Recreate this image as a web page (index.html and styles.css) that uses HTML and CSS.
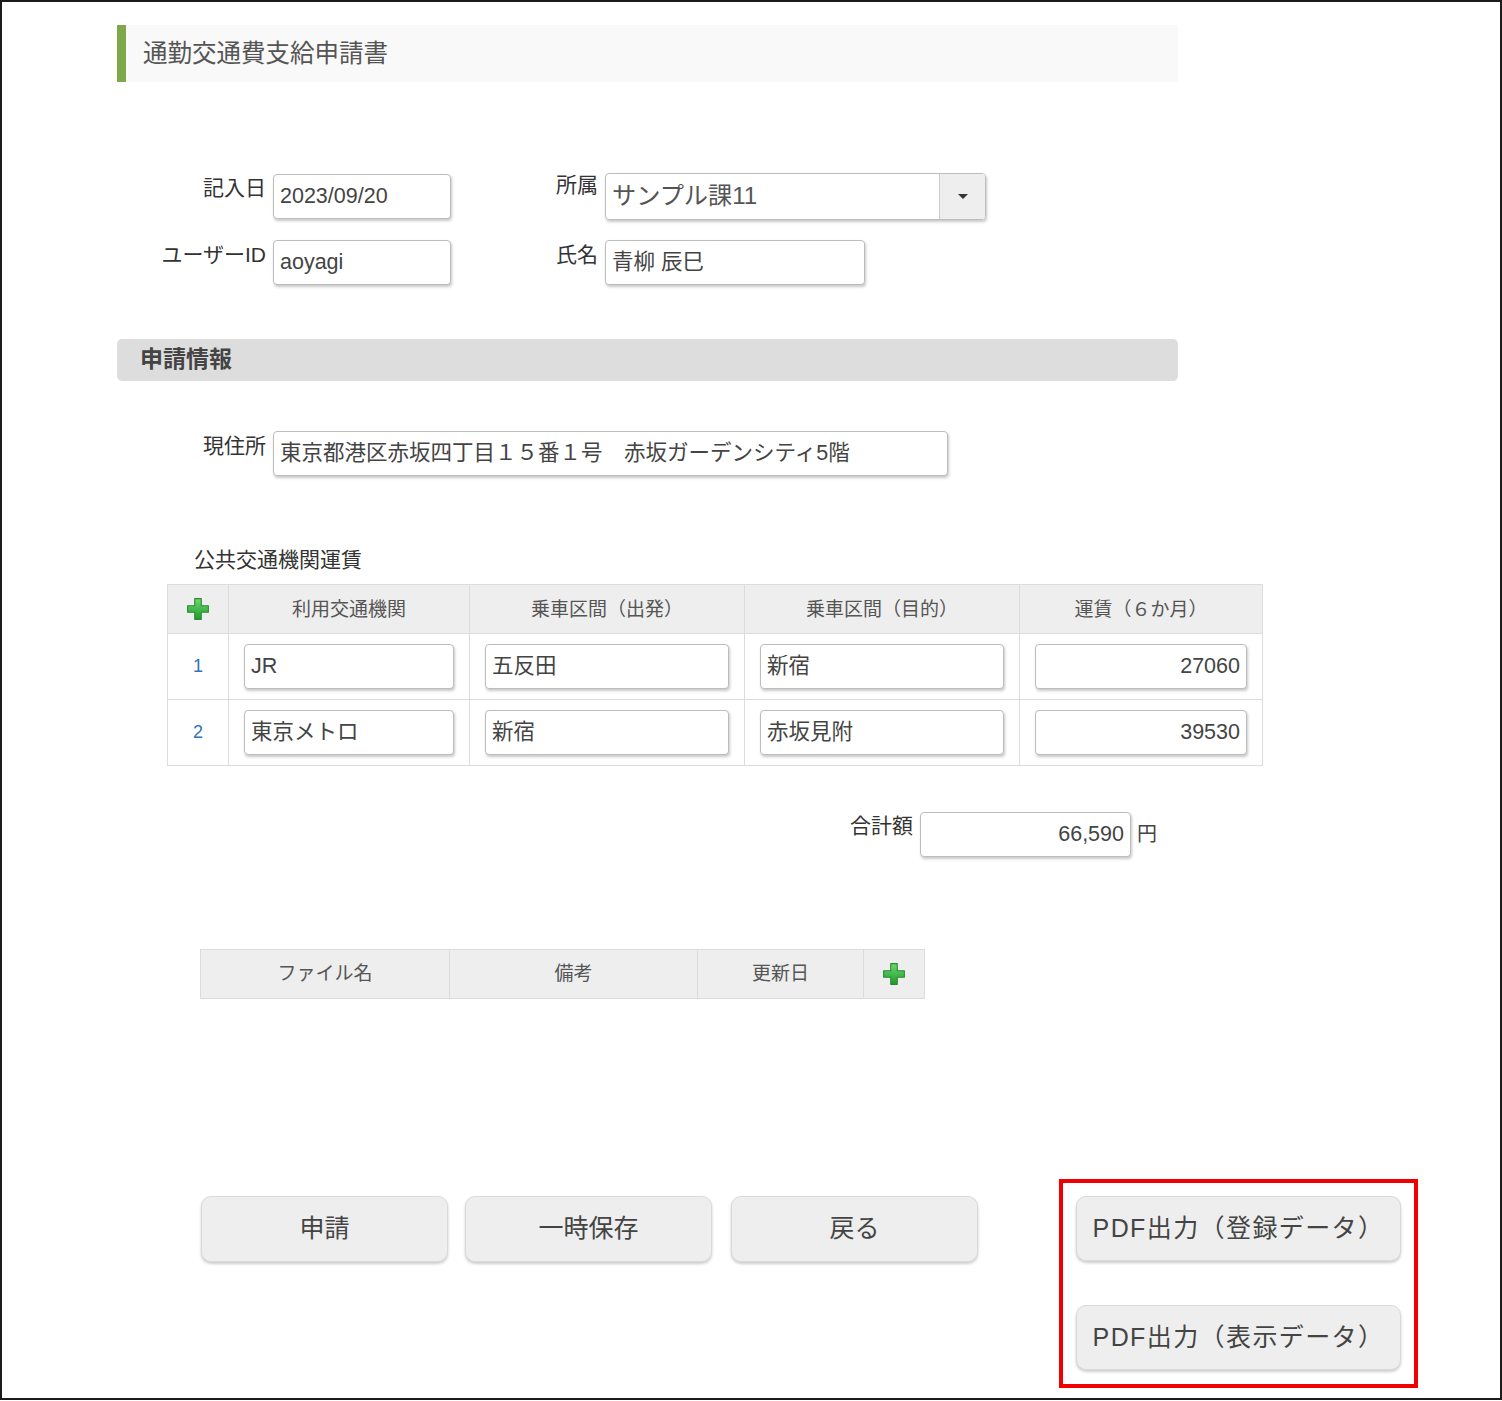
FILE: index.html
```html
<!DOCTYPE html>
<html lang="ja">
<head>
<meta charset="utf-8">
<title>通勤交通費支給申請書</title>
<link rel="stylesheet" href="styles.css">
</head>
<body>
<div class="frame">
  <div class="page">
    <div class="title">通勤交通費支給申請書</div>

    <div class="frow r1">
      <div class="lbl l1">記入日</div>
      <div class="inp w178 mt1">2023/09/20</div>
      <div class="lbl l2 up">所属</div>
      <div class="select">
        <span class="sel-text">サンプル課11</span>
        <span class="sel-btn"><span class="caret"></span></span>
      </div>
    </div>

    <div class="frow r2">
      <div class="lbl l1">ユーザーID</div>
      <div class="inp w178">aoyagi</div>
      <div class="lbl l2">氏名</div>
      <div class="inp w260">青柳 辰巳</div>
    </div>

    <div class="section">申請情報</div>

    <div class="frow addr">
      <div class="lbl l1">現住所</div>
      <div class="inp w675">東京都港区赤坂四丁目１５番１号　赤坂ガーデンシティ5階</div>
    </div>

    <div class="sub">公共交通機関運賃</div>

    <table class="fare">
      <colgroup>
        <col class="c0"><col class="c1"><col class="c2"><col class="c3"><col class="c4">
      </colgroup>
      <thead>
        <tr>
          <th><svg class="plus" viewBox="0 0 22 22" width="24" height="24"><defs><linearGradient id="g1" x1="0" y1="0" x2="0" y2="1"><stop offset="0" stop-color="#6fd86f"/><stop offset="1" stop-color="#1f9a2c"/></linearGradient></defs><path d="M8 1.5h6v6.5h6.5v6h-6.5v6.5h-6v-6.5h-6.5v-6h6.5z" fill="url(#g1)" stroke="#2a8a30" stroke-width="1" stroke-linejoin="round"/></svg></th>
          <th>利用交通機関</th>
          <th>乗車区間（出発）</th>
          <th>乗車区間（目的）</th>
          <th>運賃（６か月）</th>
        </tr>
      </thead>
      <tbody>
        <tr>
          <td class="num">1</td>
          <td><div class="inp">JR</div></td>
          <td><div class="inp">五反田</div></td>
          <td><div class="inp">新宿</div></td>
          <td><div class="inp right">27060</div></td>
        </tr>
        <tr>
          <td class="num">2</td>
          <td><div class="inp">東京メトロ</div></td>
          <td><div class="inp">新宿</div></td>
          <td><div class="inp">赤坂見附</div></td>
          <td><div class="inp right">39530</div></td>
        </tr>
      </tbody>
    </table>

    <div class="total">
      <div class="lbl">合計額</div>
      <div class="inp w211 right">66,590</div>
      <div class="yen">円</div>
    </div>

    <table class="files">
      <colgroup>
        <col class="f1"><col class="f2"><col class="f3"><col class="f4">
      </colgroup>
      <tr>
        <th>ファイル名</th>
        <th>備考</th>
        <th>更新日</th>
        <th class="pl"><svg class="plus" viewBox="0 0 22 22" width="24" height="24"><defs><linearGradient id="g2" x1="0" y1="0" x2="0" y2="1"><stop offset="0" stop-color="#6fd86f"/><stop offset="1" stop-color="#1f9a2c"/></linearGradient></defs><path d="M8 1.5h6v6.5h6.5v6h-6.5v6.5h-6v-6.5h-6.5v-6h6.5z" fill="url(#g2)" stroke="#2a8a30" stroke-width="1" stroke-linejoin="round"/></svg></th>
      </tr>
    </table>

    <div class="actions">
      <div class="btn b1">申請</div>
      <div class="btn b2">一時保存</div>
      <div class="btn b3">戻る</div>
      <div class="pdfbox">
        <div class="btn pdf">PDF出力（登録データ）</div>
        <div class="btn pdf">PDF出力（表示データ）</div>
      </div>
    </div>
  </div>
</div>
</body>
</html>
```

FILE: styles.css
```css
html, body {
  margin: 0;
  padding: 0;
  background: #fff;
}
body {
  font-family: "Liberation Sans", "Noto Sans CJK JP", sans-serif;
  color: #333;
}
.frame {
  box-sizing: border-box;
  width: 1502px;
  height: 1400px;
  border: 2px solid #1b1b1b;
  box-shadow: 0 1px 0 #a0a0a0;
  overflow: hidden;
}
.page {
  padding: 23px 0 0 115px;
  width: 1061px;
}
.title {
  box-sizing: border-box;
  height: 57px;
  border-left: 9px solid #7fa84a;
  background: #f9f9f9;
  padding: 0 0 4px 17px;
  display: flex;
  align-items: center;
  font-size: 24.5px;
  color: #555;
}
.frow {
  display: flex;
  align-items: flex-start;
}
.r1 { margin-top: 91px; }
.r2 { margin-top: 20px; }
.addr { margin-top: 50px; }
.lbl {
  font-size: 21px;
  line-height: 30px;
  color: #333;
  text-align: right;
  white-space: nowrap;
  flex-shrink: 0;
}
.lbl.up { margin-top: -3px; }
.l1 { width: 149px; margin-right: 7px; }
.l2 { width: 147px; margin-right: 7px; }
.mt1 { margin-top: 1px; }
.inp {
  box-sizing: border-box;
  height: 45px;
  border: 1px solid #bdbdbd;
  border-radius: 4px;
  box-shadow: 1px 2px 3px rgba(0, 0, 0, 0.22);
  background: #fff;
  padding: 0 6px;
  font-size: 21.5px;
  line-height: 43px;
  color: #444;
  white-space: nowrap;
  overflow: hidden;
  flex-shrink: 0;
}
.inp.right { text-align: right; }
.w178 { width: 178px; }
.w260 { width: 260px; }
.w675 { width: 675px; }
.w211 { width: 211px; }
.select {
  box-sizing: border-box;
  width: 381px;
  height: 47px;
  border: 1px solid #bdbdbd;
  border-radius: 4px;
  box-shadow: 1px 2px 3px rgba(0, 0, 0, 0.22);
  display: flex;
  overflow: hidden;
  flex-shrink: 0;
}
.sel-text {
  flex: 1;
  padding-left: 6px;
  font-size: 24.2px;
  line-height: 44px;
  color: #555;
}
.sel-btn {
  width: 45px;
  background: #eee;
  border-left: 1px solid #ccc;
  display: flex;
  align-items: center;
  justify-content: center;
}
.caret {
  width: 0;
  height: 0;
  border-left: 5px solid transparent;
  border-right: 5px solid transparent;
  border-top: 5px solid #333;
}
.section {
  margin-top: 54px;
  box-sizing: border-box;
  height: 42px;
  background: #dddddd;
  border-radius: 5px;
  padding-left: 23px;
  font-size: 23px;
  font-weight: bold;
  line-height: 40px;
  color: #444;
}
.sub {
  margin: 70px 0 0 77px;
  font-size: 21px;
  line-height: 28px;
  height: 28px;
  color: #333;
}
table {
  border-collapse: collapse;
  table-layout: fixed;
}
.fare {
  margin: 10px 0 0 50px;
  width: 1095px;
}
.fare .c0 { width: 61px; }
.fare .c1 { width: 241px; }
.fare .c2 { width: 275px; }
.fare .c3 { width: 275px; }
.fare .c4 { width: 243px; }
.fare th, .fare td, .files th {
  border: 1px solid #dcdcdc;
}
.fare th {
  height: 49px;
  box-sizing: border-box;
  background: #eeeeee;
  font-weight: normal;
  font-size: 19px;
  color: #555;
  padding: 0 0 4px;
  text-align: center;
}
.fare th:first-child { padding: 0; }
.fare td {
  height: 66px;
  box-sizing: border-box;
  padding: 0 15px;
}
.fare td.num {
  padding: 0;
  text-align: center;
  font-size: 18px;
  color: #2f73b8;
}
.plus {
  display: block;
  margin: 0 auto;
}
.total {
  margin-top: 46px;
  display: flex;
  align-items: flex-start;
  padding-left: 733px;
}
.total .lbl { margin-right: 7px; line-height: 28px; }
.yen {
  margin-left: 6px;
  font-size: 20px;
  line-height: 45px;
  color: #444;
}
.files {
  margin: 92px 0 0 83px;
  width: 724px;
}
.files .f1 { width: 249px; }
.files .f2 { width: 248px; }
.files .f3 { width: 166px; }
.files .f4 { width: 61px; }
.files th {
  height: 49px;
  box-sizing: border-box;
  padding: 0 0 5px;
  background: #eeeeee;
  font-weight: normal;
  font-size: 19px;
  color: #555;
  text-align: center;
}
.files th.pl { padding: 0; }
.actions {
  margin-top: 180px;
  display: flex;
  align-items: flex-start;
  padding-left: 84px;
  width: 1400px;
}
.btn {
  box-sizing: border-box;
  height: 66px;
  background: #eeeeee;
  border: 1px solid #dadada;
  border-radius: 10px;
  box-shadow: 0 2px 3px rgba(0, 0, 0, 0.2);
  font-size: 25px;
  line-height: 62px;
  color: #444;
  text-align: center;
  white-space: nowrap;
  flex-shrink: 0;
}
.b1, .b2, .b3 {
  width: 247px;
  margin-top: 17px;
}
.b2 { margin-left: 17px; }
.b3 { margin-left: 19px; }
.pdfbox {
  margin-left: 81px;
  box-sizing: border-box;
  width: 359px;
  height: 209px;
  border: 4px solid #f00000;
  padding: 13px 0 0 13px;
  flex-shrink: 0;
}
.pdf {
  width: 325px;
  height: 65px;
  letter-spacing: 1.4px;
}
.pdf + .pdf { margin-top: 44px; }
```
